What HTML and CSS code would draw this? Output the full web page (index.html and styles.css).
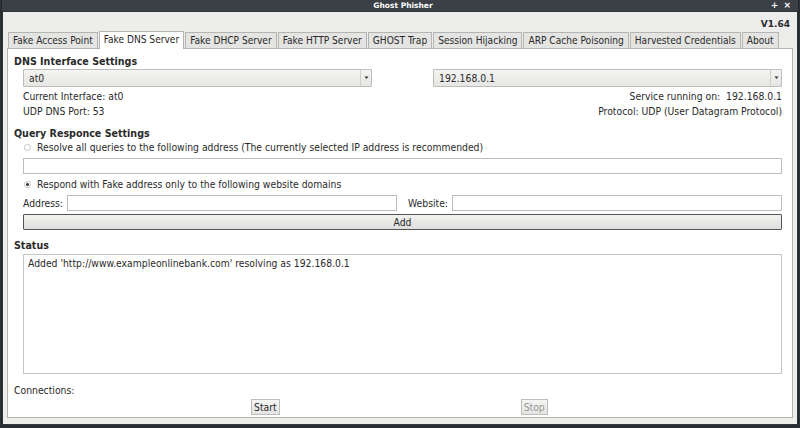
FILE: index.html
```html
<!DOCTYPE html>
<html>
<head>
<meta charset="utf-8">
<link rel="stylesheet" href="styles.css">
</head>
<body>
<div class="window">
  <div class="titlebar">
    <span class="title">Ghost Phisher</span>
    <span class="wbtns">+ ×</span>
  </div>
  <div class="client">
    <div class="version">V1.64</div>
    <div class="tabs">
      <div class="tab">Fake Access Point</div>
      <div class="tab active">Fake DNS Server</div>
      <div class="tab">Fake DHCP Server</div>
      <div class="tab">Fake HTTP Server</div>
      <div class="tab">GHOST Trap</div>
      <div class="tab">Session Hijacking</div>
      <div class="tab">ARP Cache Poisoning</div>
      <div class="tab">Harvested Credentials</div>
      <div class="tab">About</div>
    </div>
    <div class="panel">
      <div class="heading">DNS Interface Settings</div>
      <div class="iface">
        <div class="col">
          <div class="combo"><span class="cval">at0</span><span class="carrow"><svg width="7" height="4" viewBox="0 0 7 4"><path d="M1.5 0.5h4l-2 2.5z" fill="#333"/></svg></span></div>
          <div class="info">Current Interface: at0</div>
          <div class="info">UDP DNS Port: 53</div>
        </div>
        <div class="col right">
          <div class="combo"><span class="cval">192.168.0.1</span><span class="carrow"><svg width="7" height="4" viewBox="0 0 7 4"><path d="M1.5 0.5h4l-2 2.5z" fill="#333"/></svg></span></div>
          <div class="info">Service running on:&nbsp; 192.168.0.1</div>
          <div class="info">Protocol: UDP (User Datagram Protocol)</div>
        </div>
      </div>
      <div class="heading h2">Query Responce Settings</div>
      <div class="radio"><span class="rdot"></span>Resolve all queries to the following address (The currently selected IP address is recommended)</div>
      <div class="field wide"></div>
      <div class="radio r2"><span class="rdot on"></span>Respond with Fake address only to the following website domains</div>
      <div class="addr">
        <span class="lbl">Address:</span><div class="field grow"></div>
        <span class="lbl lbl2">Website:</span><div class="field grow"></div>
      </div>
      <div class="addbtn">Add</div>
      <div class="heading h3">Status</div>
      <div class="status">Added 'http://www.exampleonlinebank.com' resolving as 192.168.0.1</div>
      <div class="conn">Connections:</div>
      <div class="btnrow">
        <div class="btn">Start</div>
        <div class="btn disabled">Stop</div>
      </div>
    </div>
  </div>
</div>
</body>
</html>
```
FILE: styles.css
```css
html, body {
  margin: 0;
  padding: 0;
  background: #2f333a;
}
body {
  font-family: "DejaVu Sans Condensed", "DejaVu Sans", sans-serif;
  font-size: 10.3px;
  color: #2a2a2a;
}
.window {
  width: 796px;
  height: 426px;
  margin: 0 0 0 1px;
  display: flex;
  flex-direction: column;
  border: 1px solid #23262b;
  border-top: none;
  background: #2f333a;
  overflow: hidden;
}
.titlebar {
  height: 11px;
  background-color: #3b3f46;
  background-image: radial-gradient(#4b5058 0.6px, transparent 0.7px);
  background-size: 2px 2px;
  position: relative;
  color: #fff;
  font-family: "DejaVu Sans", sans-serif;
  font-weight: bold;
  font-size: 7.5px;
  line-height: 11px;
  text-align: center;
}
.title {
  display: inline-block;
  padding-left: 6px;
}
.wbtns {
  position: absolute;
  right: 6px;
  top: 0;
  font-size: 9px;
  letter-spacing: 1px;
}
.client {
  flex: 1;
  background: #ededeb;
  margin: 1px 1px 2px 1px;
  display: flex;
  flex-direction: column;
  padding: 0 4px 6px 4px;
}
.version {
  text-align: right;
  font-family: "DejaVu Sans", sans-serif;
  font-weight: bold;
  font-size: 9px;
  padding: 6px 3px 0 0;
  height: 13px;
  line-height: 13px;
}
.tabs {
  display: flex;
  align-items: flex-end;
  height: 17px;
  padding-left: 1px;
  position: relative;
  z-index: 1;
}
.tab {
  height: 15px;
  line-height: 15px;
  padding: 0 4px;
  border: 1px solid #b4b4b2;
  border-bottom: none;
  background: #e4e4e2;
  margin-right: 1px;
  white-space: nowrap;
  font-size: 10.1px;
}
.tab.active {
  background: #fff;
  height: 17px;
  line-height: 16px;
  margin-bottom: -1px;
}
.panel {
  flex: 1;
  background: #fff;
  border: 1px solid #b4b4b2;
  padding: 6px 10px 0 6px;
  display: flex;
  flex-direction: column;
}
.heading {
  font-weight: bold;
  font-size: 10.6px;
  height: 13px;
  line-height: 13px;
}
.iface {
  display: flex;
  justify-content: space-between;
  padding-left: 9px;
  margin-top: 1px;
}
.col {
  width: 350px;
  display: flex;
  flex-direction: column;
}
.col.right {
  align-items: flex-end;
}
.combo {
  width: 347px;
  height: 16px;
  border: 1px solid #bdbdbb;
  border-radius: 1px;
  background: linear-gradient(#f4f4f3, #e6e6e4);
  display: flex;
  align-items: center;
}
.cval {
  flex: 1;
  padding-left: 5px;
}
.carrow {
  width: 10px;
  height: 16px;
  border-left: 1px solid #cfcfcd;
  display: flex;
  align-items: center;
  justify-content: center;
}
.info {
  height: 15px;
  line-height: 15px;
}
.col .combo + .info {
  margin-top: 2px;
}
.h2 {
  margin-top: 8px;
}
.radio {
  padding-left: 10px;
  height: 15px;
  line-height: 15px;
  display: flex;
  align-items: center;
}
.r2 {
  margin-top: 3px;
}
.rdot {
  width: 5px;
  height: 5px;
  border: 1px solid #c4c4c2;
  border-radius: 50%;
  margin-right: 6px;
  box-sizing: content-box;
}
.rdot.on {
  background: radial-gradient(#333 1.2px, #fff 1.6px);
  border-color: #bdbdbb;
}
.field {
  height: 14px;
  border: 1px solid #bdbdbb;
  background: #fff;
}
.field.wide {
  margin: 3px 0 0 9px;
}
.addr {
  display: flex;
  align-items: center;
  padding-left: 9px;
  margin-top: 3px;
}
.lbl {
  margin-right: 4px;
}
.lbl2 {
  margin-left: 11px;
}
.grow {
  flex: 1;
}
.addbtn {
  margin: 3px 0 0 9px;
  height: 14px;
  line-height: 14px;
  border: 1px solid #555;
  border-radius: 1px;
  background: linear-gradient(#f2f2f1, #dededc);
  text-align: center;
}
.h3 {
  margin-top: 9px;
}
.status {
  margin: 2px 0 0 9px;
  height: 114px;
  border: 1px solid #c4c4c2;
  padding: 2px 4px;
  line-height: 13px;
}
.conn {
  margin-top: 9px;
  height: 14px;
  line-height: 14px;
}
.btnrow {
  display: flex;
  margin-top: 2px;
  padding-left: 237px;
  gap: 241px;
}
.btn {
  height: 14px;
  line-height: 14px;
  border: 1px solid #bdbdbb;
  background: linear-gradient(#f5f5f4, #e4e4e2);
  padding: 0 2px;
}
.btn.disabled {
  color: #9a9a98;
}
```
